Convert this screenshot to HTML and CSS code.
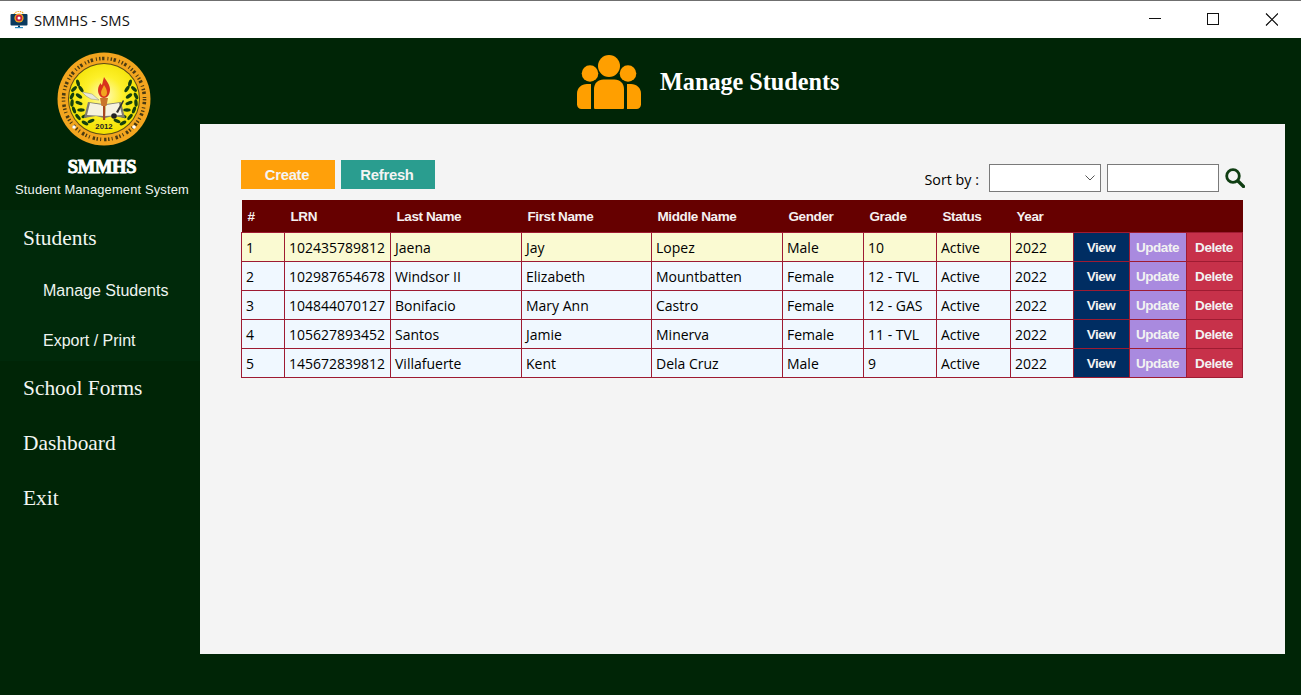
FILE: index.html
```html
<!DOCTYPE html>
<html lang="en">
<head>
<meta charset="utf-8">
<title>SMMHS - SMS</title>
<link rel="stylesheet" href="styles.css">
</head>
<body>
<div class="window">
  <header class="titlebar">
    <div class="title-left">
      <svg class="app-icon" viewBox="0 0 18 18" width="18" height="18" aria-hidden="true">
        <path d="M4 3.500a5.500 5.500 0 0 1 10 0" stroke="#f0a81e" stroke-width="1.200" fill="none" stroke-dasharray="1.500 .8"/>
        <rect x="0.500" y="3" width="17" height="11.500" rx="1" fill="#0b3a5e"/>
        <rect x="5" y="16" width="8" height="1.200" fill="#2b8fc4"/>
        <rect x="8" y="14.500" width="2" height="1.500" fill="#0b3a5e"/>
        <circle cx="9" cy="7" r="4.600" fill="#f0a81e"/>
        <circle cx="9" cy="7" r="3.300" fill="#c8203c"/>
        <circle cx="9" cy="7" r="1.500" fill="#ffffff"/>
      </svg>
      <span class="app-title">SMMHS - SMS</span>
    </div>
    <div class="win-controls">
      <svg width="13" height="13" viewBox="0 0 13 13" aria-hidden="true"><path d="M0 5.500h12" stroke="#111" fill="none"/></svg>
      <svg width="13" height="13" viewBox="0 0 13 13" aria-hidden="true"><rect x="0.500" y="0.500" width="11" height="11" stroke="#111" fill="none"/></svg>
      <svg width="13" height="13" viewBox="0 0 13 13" aria-hidden="true"><path d="M1 .500l12 12M13 .500l-12 12" stroke="#000" stroke-width="1.100" fill="none"/></svg>
    </div>
  </header>

  <div class="app">
    <aside class="sidebar">
      <div class="brand">
        <svg class="logo" viewBox="0 0 94 94" width="94" height="94" aria-hidden="true">
          <defs>
            <radialGradient id="sun" cx="50%" cy="45%" r="55%">
              <stop offset="0" stop-color="#fffbc0"/>
              <stop offset="0.5" stop-color="#fdf02a"/>
              <stop offset="1" stop-color="#f2e000"/>
            </radialGradient>
            <g id="leaf"><ellipse cx="0" cy="0" rx="3.700" ry="1.700" fill="#14400f"/></g>
          </defs>
          <circle cx="47" cy="47" r="46.500" fill="#f2a51f"/>
          <circle cx="47" cy="47" r="40.500" fill="none" stroke="#4a3a12" stroke-width="3.600" stroke-dasharray="1.400 1.600 2.400 3 1 2.200"/>
          <circle cx="47" cy="47" r="36" fill="#5a4a14"/>
          <circle cx="47" cy="47" r="35" fill="url(#sun)"/>
          <use href="#leaf" transform="translate(21 31) rotate(75)"/>
          <use href="#leaf" transform="translate(17 37) rotate(-45)"/>
          <use href="#leaf" transform="translate(24 37) rotate(55)"/>
          <use href="#leaf" transform="translate(15 44) rotate(-65)"/>
          <use href="#leaf" transform="translate(22 44) rotate(35)"/>
          <use href="#leaf" transform="translate(15 51) rotate(-85)"/>
          <use href="#leaf" transform="translate(22 51) rotate(20)"/>
          <use href="#leaf" transform="translate(17 58) rotate(70)"/>
          <use href="#leaf" transform="translate(24 58) rotate(0)"/>
          <use href="#leaf" transform="translate(21 65) rotate(50)"/>
          <use href="#leaf" transform="translate(28 64) rotate(-20)"/>
          <use href="#leaf" transform="translate(28 71) rotate(30)"/>
          <use href="#leaf" transform="translate(34 69) rotate(-25)"/>
          <use href="#leaf" transform="translate(73 31) rotate(-75)"/>
          <use href="#leaf" transform="translate(77 37) rotate(45)"/>
          <use href="#leaf" transform="translate(70 37) rotate(-55)"/>
          <use href="#leaf" transform="translate(79 44) rotate(65)"/>
          <use href="#leaf" transform="translate(72 44) rotate(-35)"/>
          <use href="#leaf" transform="translate(79 51) rotate(85)"/>
          <use href="#leaf" transform="translate(72 51) rotate(-20)"/>
          <use href="#leaf" transform="translate(77 58) rotate(-70)"/>
          <use href="#leaf" transform="translate(70 58) rotate(0)"/>
          <use href="#leaf" transform="translate(73 65) rotate(-50)"/>
          <use href="#leaf" transform="translate(66 64) rotate(20)"/>
          <use href="#leaf" transform="translate(66 71) rotate(-30)"/>
          <use href="#leaf" transform="translate(60 69) rotate(25)"/>
          <path d="M25 40l10 2 7 6-8-1-5-3z" fill="#e8e8d8" stroke="#777" stroke-width=".4"/>
          <path d="M27 66l4-16 15 2 1 14-8-2z" fill="#7e7c72"/>
          <path d="M68 66l-4-16-15 2-1 14 8-2z" fill="#7e7c72"/>
          <path d="M30 63l3-12 13 2 1 11z" fill="#f6f2df"/>
          <path d="M65 63l-3-12-13 2-1 11z" fill="#f6f2df"/>
          <path d="M59 60l7-12 1 1-6 12z" fill="#333"/>
          <circle cx="57" cy="64" r="2.800" fill="#222"/>
          <rect x="46" y="50" width="2.200" height="18" fill="#a84620"/>
          <path d="M43 46h8l-1.500 8h-5z" fill="#c9742a"/>
          <path d="M47 25c3 4.500 6 8 6 12.500 0 5-2.800 8.500-6 8.500s-6-3.500-6-8c0-3.500 1.500-5 2.500-7 .5 1 1 2 1.500 2 .5-2.500 1.200-5 2-8z" fill="#d8331c"/>
          <path d="M47 33c1.800 2.500 3 5 3 7.500 0 2.500-1.500 4-3 4s-3-1.500-3-4c0-2.500 2-4.500 3-7.500z" fill="#f2a51f"/>
          <text class="logo-year" x="47" y="77" text-anchor="middle">2012</text>
          <circle cx="17" cy="75" r="1.800" fill="#fff"/>
          <circle cx="77" cy="75" r="1.800" fill="#fff"/>
        </svg>
        <div class="brand-name">SMMHS</div>
        <div class="brand-sub">Student Management System</div>
      </div>
      <nav class="nav">
        <div class="nav-group">
          <a class="nav-main nav-students">Students</a>
          <a class="nav-sub">Manage Students</a>
          <a class="nav-sub">Export / Print</a>
        </div>
        <a class="nav-main">School Forms</a>
        <a class="nav-main">Dashboard</a>
        <a class="nav-main">Exit</a>
      </nav>
    </aside>

    <main class="content">
      <div class="page-head">
        <svg class="head-icon" viewBox="0 0 64 54" width="64" height="54" aria-hidden="true">
          <circle cx="32" cy="11" r="11" fill="#ff9f00"/>
          <circle cx="13" cy="18.500" r="8.300" fill="#ff9f00"/>
          <circle cx="51" cy="18.500" r="8.300" fill="#ff9f00"/>
          <path d="M17 52.500V34c0-5.500 4-9.500 9.500-9.500h11c5.500 0 9.500 4 9.500 9.500v18.500c0 1-.5 1.500-1.500 1.500h-27c-1 0-1.500-.5-1.500-1.500z" fill="#ff9f00"/>
          <path d="M14 29v25H4.500C2 54 0 52 0 49.500V38.500C0 33 4.500 29 10 29z" fill="#ff9f00"/>
          <path d="M50 29v25h9.500c2.500 0 4.500-2 4.500-4.500V38.500C64 33 59.500 29 54 29z" fill="#ff9f00"/>
        </svg>
        <h1 class="page-title">Manage Students</h1>
      </div>

      <section class="panel">
        <div class="toolbar">
          <div class="actions">
            <button class="btn btn-create" type="button">Create</button>
            <button class="btn btn-refresh" type="button">Refresh</button>
          </div>
          <div class="sort">
            <span class="sort-label">Sort by :</span>
            <div class="select-box">
              <svg width="10" height="6" viewBox="0 0 10 6" aria-hidden="true"><path d="M.5.500L5 5l4.500-4.500" stroke="#555" fill="none"/></svg>
            </div>
            <div class="search-box"></div>
            <svg class="search-icon" width="20" height="20" viewBox="0 0 20 20" aria-hidden="true">
              <circle cx="8" cy="8" r="6.300" stroke="#0f3d12" stroke-width="2.800" fill="none"/>
              <path d="M13 13l5.500 5.500" stroke="#0f3d12" stroke-width="3.200" stroke-linecap="round"/>
            </svg>
          </div>
        </div>

        <table class="grid">
          <colgroup>
            <col class="c1"><col class="c2"><col class="c3"><col class="c4"><col class="c5"><col class="c6"><col class="c7"><col class="c8"><col class="c9"><col class="c10"><col class="c11"><col class="c12">
          </colgroup>
          <thead>
            <tr><th>#</th><th>LRN</th><th>Last Name</th><th>First Name</th><th>Middle Name</th><th>Gender</th><th>Grade</th><th>Status</th><th>Year</th><th></th><th></th><th></th></tr>
          </thead>
          <tbody>
            <tr class="selected"><td>1</td><td>102435789812</td><td>Jaena</td><td>Jay</td><td>Lopez</td><td>Male</td><td>10</td><td>Active</td><td>2022</td><td class="act view">View</td><td class="act update">Update</td><td class="act delete">Delete</td></tr>
            <tr><td>2</td><td>102987654678</td><td>Windsor II</td><td>Elizabeth</td><td>Mountbatten</td><td>Female</td><td>12 - TVL</td><td>Active</td><td>2022</td><td class="act view">View</td><td class="act update">Update</td><td class="act delete">Delete</td></tr>
            <tr><td>3</td><td>104844070127</td><td>Bonifacio</td><td>Mary Ann</td><td>Castro</td><td>Female</td><td>12 - GAS</td><td>Active</td><td>2022</td><td class="act view">View</td><td class="act update">Update</td><td class="act delete">Delete</td></tr>
            <tr><td>4</td><td>105627893452</td><td>Santos</td><td>Jamie</td><td>Minerva</td><td>Female</td><td>11 - TVL</td><td>Active</td><td>2022</td><td class="act view">View</td><td class="act update">Update</td><td class="act delete">Delete</td></tr>
            <tr><td>5</td><td>145672839812</td><td>Villafuerte</td><td>Kent</td><td>Dela Cruz</td><td>Male</td><td>9</td><td>Active</td><td>2022</td><td class="act view">View</td><td class="act update">Update</td><td class="act delete">Delete</td></tr>
          </tbody>
        </table>
      </section>
    </main>
  </div>
</div>
</body>
</html>
```
FILE: styles.css
```css
* { box-sizing: border-box; }
html, body { margin: 0; height: 100%; overflow: hidden; }
body { font-family: "Open Sans", "Noto Sans", sans-serif; background: #002506; }

.window { display: grid; grid-template-rows: 38px 1fr; height: 695px; }

.titlebar {
  display: flex; justify-content: space-between; align-items: center;
  background: #fff; border-top: 1px solid #6f6f6f;
}
.title-left { display: flex; align-items: center; padding-left: 10px; }
.app-icon { margin-right: 6px; }
.app-title { font-size: 14.8px; color: #111; }
.win-controls { display: flex; gap: 45px; padding-right: 23px; }

.app { display: grid; grid-template-columns: 200px 1fr; }

.sidebar { display: flex; flex-direction: column; color: #f4f8f4; }
.brand { display: flex; flex-direction: column; align-items: center; padding-top: 14px; }
.logo { display: block; margin-bottom: 12px; margin-left: 8px; }
.logo-year { font: bold 7.8px "Liberation Sans", sans-serif; fill: #222; }
.brand-name {
  font: bold 18.500px/19px "Liberation Serif", serif; color: #fff;
  letter-spacing: -0.3px; -webkit-text-stroke: 0.9px #fff; margin-left: 4px;
}
.brand-sub { font: 12.9px/20px "Liberation Sans", sans-serif; color: #eef4f0; letter-spacing: 0.16px; margin-top: 3px; margin-left: 4px; }

.nav { display: flex; flex-direction: column; margin-top: 10px; }
.nav-group { display: flex; flex-direction: column; background: #00290a; }
.nav-main { font: 21.4px/55px "Liberation Serif", serif; padding-left: 23px; color: #f2f6f2; }
.nav-students { padding-top: 5px; line-height: 46px; }
.nav-sub { font: 16px/40px "Liberation Sans", sans-serif; padding: 10px 0 0 43px; color: #eef4f0; }

.content { display: grid; grid-template-rows: 86px 530px; padding-right: 16px; }
.page-head { display: flex; align-items: center; gap: 19px; padding: 2px 0 0 377px; }
.head-icon { display: block; }
.page-title { margin: 0; font: bold 24.2px "Liberation Serif", serif; color: #fff; }

.panel { background: #f4f4f4; padding: 36px 42px 0 41px; }
.toolbar { display: flex; justify-content: space-between; height: 40px; }
.actions { display: flex; gap: 6px; align-items: flex-start; }
.btn {
  width: 94px; height: 29px; border: 0; padding: 0 2px 0 0; color: #f4f4f4;
  font: bold 14.8px "Liberation Sans", sans-serif; letter-spacing: -0.25px;
}
.btn-create { background: #ffa00a; }
.btn-refresh { background: #2a9d8f; }
.sort { display: flex; align-items: flex-start; gap: 6px; margin-right: -2px; padding-top: 4px; }
.sort-label { font-size: 14.3px; line-height: 31px; color: #000; margin-right: 4px; }
.select-box, .search-box {
  width: 112px; height: 28px; background: #fff; border: 1px solid #7a7a7a;
}
.select-box { display: flex; align-items: center; justify-content: flex-end; padding-right: 5px; }
.search-icon { margin-top: 4px; }

.grid { border-collapse: collapse; table-layout: fixed; width: 1002px; }
.c1 { width: 43px; } .c2 { width: 106px; } .c3 { width: 131px; } .c4 { width: 130px; }
.c5 { width: 131px; } .c6 { width: 81px; } .c7 { width: 73px; } .c8 { width: 74px; }
.c9 { width: 63px; } .c10 { width: 56px; } .c11 { width: 57px; } .c12 { width: 56px; }

.grid thead tr { height: 32px; background: #660000; }
.grid th {
  text-align: left; padding: 2px 0 0 6px; color: #f6f0f0;
  font: bold 13.5px "Liberation Sans", sans-serif; letter-spacing: -0.4px;
}
.grid tbody tr { height: 29px; background: #f0f8ff; }
.grid tbody tr.selected { background: #fafad2; }
.grid td {
  border: 1px solid #9e1b32; padding: 1px 0 0 4px; color: #000; font-size: 14px;
  white-space: nowrap; overflow: hidden;
}
.grid td.act {
  text-align: center; padding: 1px 1px 0 0; color: #f2f2f2;
  font: bold 13.5px "Liberation Sans", sans-serif; letter-spacing: -0.45px;
}
.view { background: #002d62; }
.update { background: #a98adf; }
.delete { background: #c7314a; }
```
